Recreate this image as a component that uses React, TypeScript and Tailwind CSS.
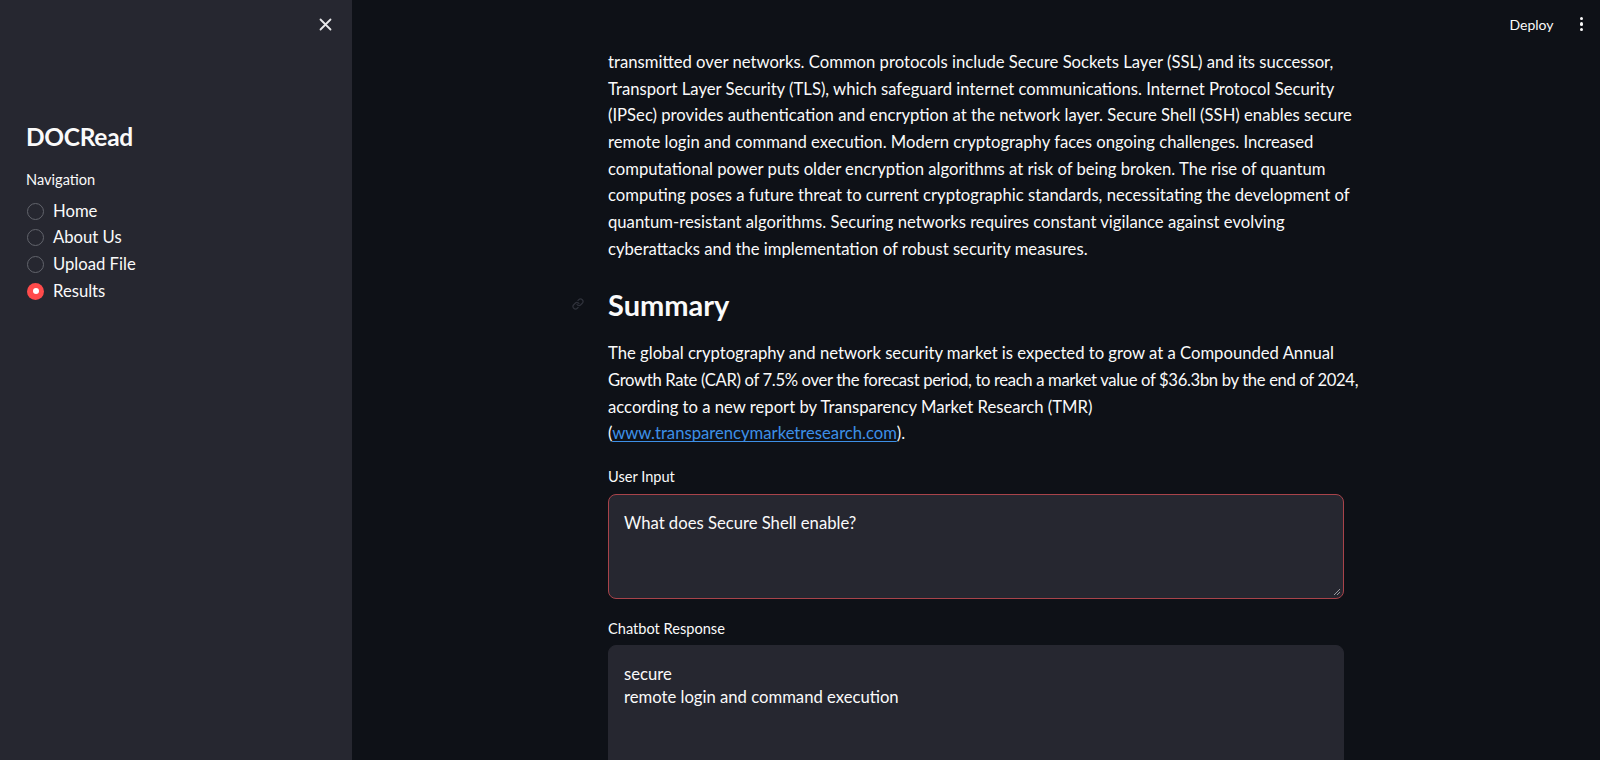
import React from "react";

const navItems = ["Home", "About Us", "Upload File", "Results"];

const bodyLines = [
  "transmitted over networks. Common protocols include Secure Sockets Layer (SSL) and its successor,",
  "Transport Layer Security (TLS), which safeguard internet communications. Internet Protocol Security",
  "(IPSec) provides authentication and encryption at the network layer. Secure Shell (SSH) enables secure",
  "remote login and command execution. Modern cryptography faces ongoing challenges. Increased",
  "computational power puts older encryption algorithms at risk of being broken. The rise of quantum",
  "computing poses a future threat to current cryptographic standards, necessitating the development of",
  "quantum-resistant algorithms. Securing networks requires constant vigilance against evolving",
  "cyberattacks and the implementation of robust security measures.",
];

const Radio: React.FC<{ label: string; checked?: boolean }> = ({ label, checked }) => (
  <div className="flex h-[26.67px] items-center">
    <div className="flex w-[27px] shrink-0 items-center justify-start pl-[1px]">
      {checked ? (
        <span className="flex h-[17px] w-[17px] items-center justify-center rounded-full bg-[#ff4b4b]">
          <span className="h-[6px] w-[6px] rounded-full bg-white" />
        </span>
      ) : (
        <span className="h-[17px] w-[17px] rounded-full border-[1.5px] border-[#62646c]" />
      )}
    </div>
    <span className="text-[16.67px] text-[#fafafa]">{label}</span>
  </div>
);

const App: React.FC = () => {
  return (
    <div
      className="flex h-[760px] w-full overflow-hidden bg-[#0e1117] text-[#fafafa]"
      style={{ fontFamily: "Lato, 'Noto Sans', sans-serif" }}
    >
      {/* sidebar */}
      <aside className="flex w-[352px] shrink-0 flex-col bg-[#262730]">
        <div className="flex h-[48px] items-center justify-end pr-[19px]">
          <button className="flex h-[16px] w-[16px] items-center justify-center text-[#e8e8ea]">
            <svg width="13" height="13" viewBox="0 0 13 13" fill="none" stroke="currentColor" strokeWidth="1.8" strokeLinecap="round">
              <path d="M1.5 1.5l10 10M11.5 1.5l-10 10" />
            </svg>
          </button>
        </div>
        <div className="px-[26px] pt-[71px]">
          <h1 className="text-[24.5px] font-bold leading-[36px] tracking-[-0.3px]">DOCRead</h1>
          <div className="mt-[15px] text-[14.6px] leading-[20px] text-[#fafafa]">Navigation</div>
          <div className="mt-[8px] flex flex-col">
            {navItems.map((item) => (
              <Radio key={item} label={item} checked={item === "Results"} />
            ))}
          </div>
        </div>
      </aside>

      {/* main */}
      <main className="flex min-w-0 flex-1 flex-col">
        <header className="flex h-[48px] shrink-0 items-center justify-end pr-[17px]">
          <span className="mr-[26px] text-[14px] text-[#fafafa]">Deploy</span>
          <span className="flex flex-col items-center gap-[2px]">
            <span className="h-[3.5px] w-[3.5px] rounded-full bg-[#fafafa]" />
            <span className="h-[3.5px] w-[3.5px] rounded-full bg-[#fafafa]" />
            <span className="h-[3.5px] w-[3.5px] rounded-full bg-[#fafafa]" />
          </span>
        </header>

        <div className="mx-auto w-[736px] text-[16.67px] leading-[26.67px]">
          <p className="mt-[1px] whitespace-nowrap">
            {bodyLines.map((l) => (
              <span key={l} className="block">{l}</span>
            ))}
          </p>

          <div className="relative mt-[25px] flex h-[35px] items-center">
            <svg
              className="absolute left-[-36px] top-[11px] text-[#2f323b]"
              width="12" height="12" viewBox="0 0 24 24" fill="none" stroke="currentColor" strokeWidth="2.5" strokeLinecap="round"
            >
              <path d="M10 13a5 5 0 0 0 7.54.54l3-3a5 5 0 0 0-7.07-7.07l-1.72 1.71" />
              <path d="M14 11a5 5 0 0 0-7.54-.54l-3 3a5 5 0 0 0 7.07 7.07l1.71-1.71" />
            </svg>
            <h3 className="text-[29px] font-bold leading-[35px]">Summary</h3>
          </div>

          <p className="mt-[18px] whitespace-nowrap">
            <span className="block">
              The global cryptography and network security market is expected to grow at a Compounded Annual
            </span>
            <span className="block tracking-[-0.35px]">
              Growth Rate (CAR) of 7.5% over the forecast period, to reach a market value of $36.3bn by the end of 2024,
            </span>
            <span className="block">according to a new report by Transparency Market Research (TMR)</span>
            <span className="block">
              (<a className="text-[#3d8fe6] underline underline-offset-2">www.transparencymarketresearch.com</a>).
            </span>
          </p>

          <label className="mt-[18px] block h-[23px] text-[14.6px] leading-[23px]">User Input</label>
          <div className="relative mt-[6px] h-[105px] rounded-[8px] border border-[#a8434a] bg-[#262730] px-[15px] pt-[17px] text-[16.67px] leading-[23.3px]">
            What does Secure Shell enable?
            <svg className="absolute bottom-[2px] right-[2px] text-[#9a9ba0]" width="8" height="8" viewBox="0 0 8 8" stroke="currentColor" strokeWidth="1">
              <path d="M7 1L1 7M7 4L4 7" />
            </svg>
          </div>

          <label className="mt-[18px] block h-[23px] text-[14.6px] leading-[23px]">Chatbot Response</label>
          <div className="mt-[5px] h-[180px] rounded-[8px] border border-[#262730] bg-[#262730] px-[15px] pt-[17px] text-[16.67px] leading-[23.3px]">
            <div>secure</div>
            <div>remote login and command execution</div>
          </div>
        </div>
      </main>
    </div>
  );
};

export default App;
